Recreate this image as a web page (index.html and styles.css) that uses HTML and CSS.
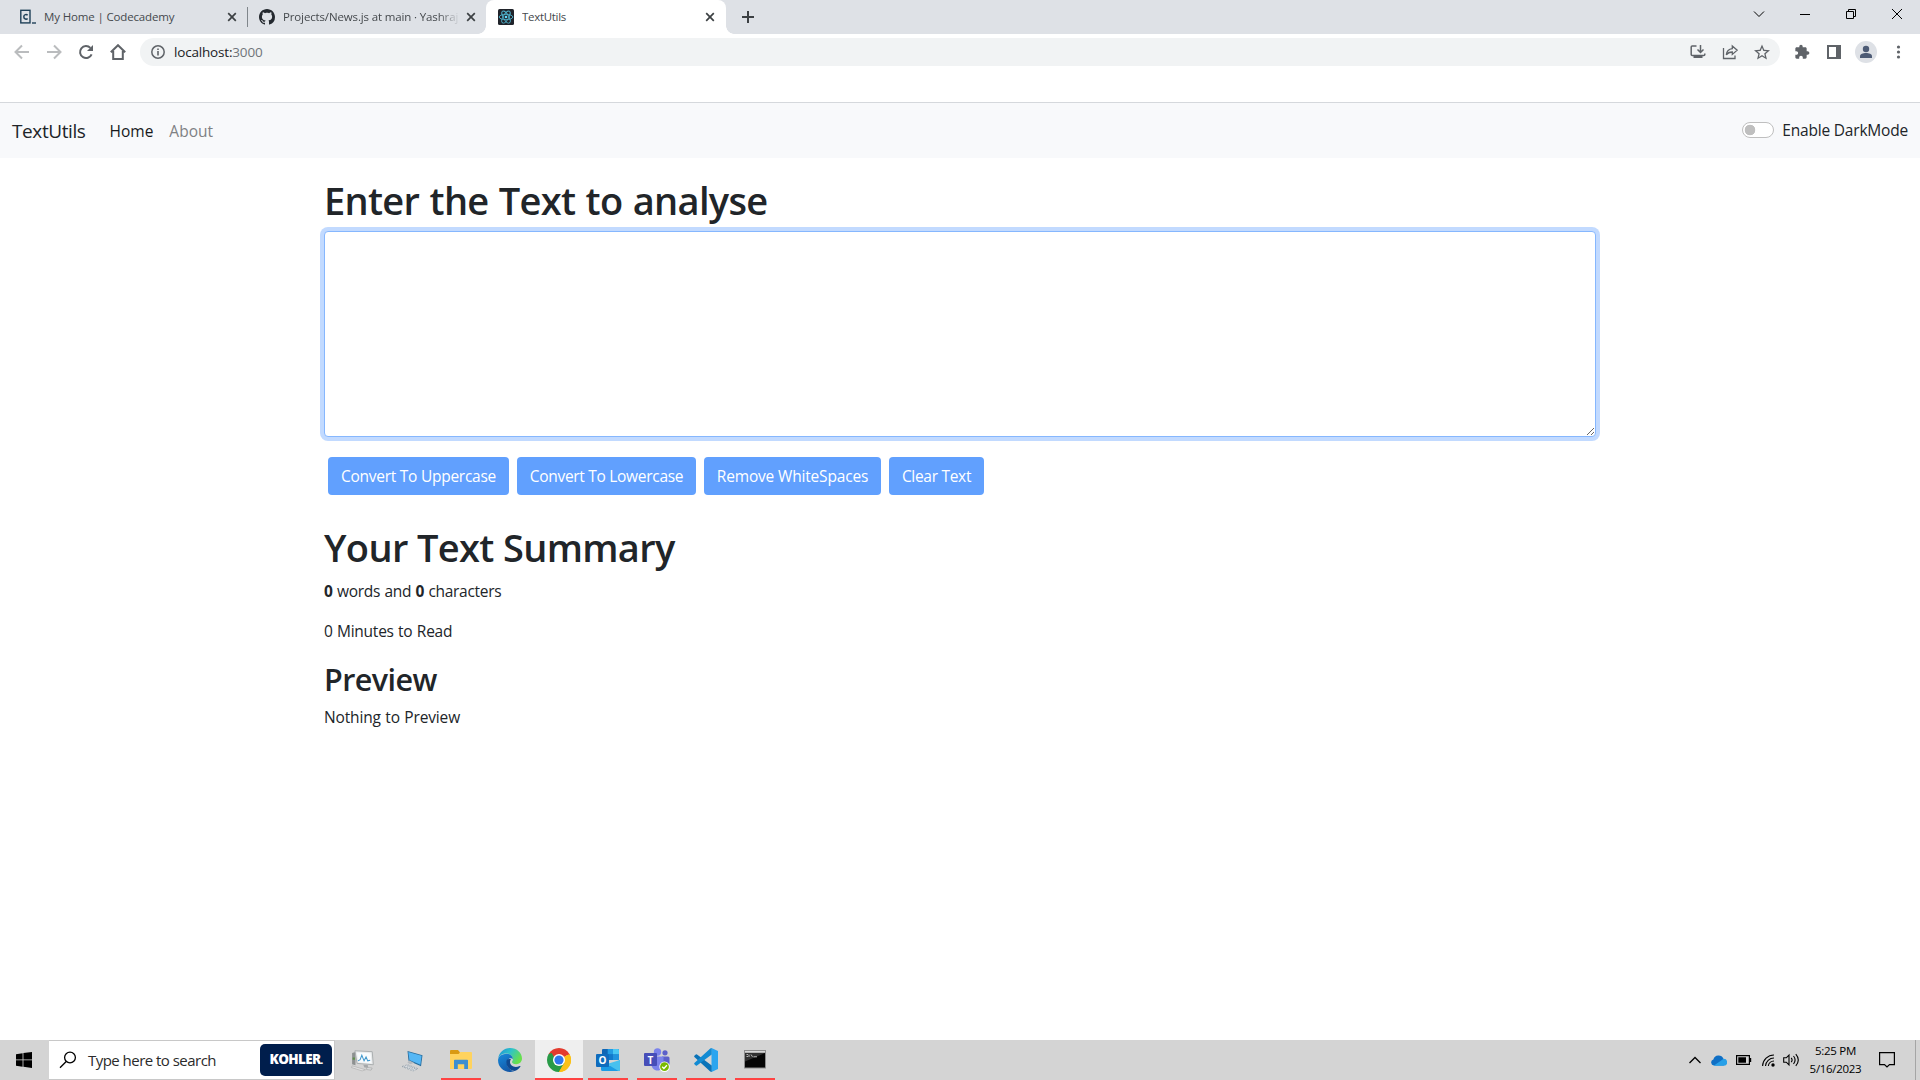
FILE: index.html
```html
<!DOCTYPE html>
<html lang="en">
<head>
<meta charset="utf-8">
<title>TextUtils</title>
<link rel="stylesheet" href="styles.css">
</head>
<body>
<header class="tabs">
  <div class="tab tab-first">
    <svg class="fav" viewBox="0 0 16 16"><rect x=".8" y="1.300" width="9.200" height="12.600" fill="none" stroke="#1f4058" stroke-width="1.400"/><path d="M7.600 6.200C6.600 5.100 3.800 5.200 3.800 7.800S6.600 10.600 7.600 9.500" fill="none" stroke="#1f4058" stroke-width="1.500"/><path d="M12 14h4" stroke="#1f4058" stroke-width="1.400"/></svg>
    <span class="tab-title t-code">My Home | Codecademy</span>
    <svg class="x" viewBox="0 0 10 10"><path d="M1.200 1.200l7.600 7.600M8.800 1.200L1.200 8.800"/></svg>
  </div>
  <div class="tab tab-second">
    <svg class="fav" viewBox="0 0 16 16"><path fill="#24292f" d="M8 0C3.580 0 0 3.580 0 8c0 3.540 2.290 6.530 5.470 7.590.4.070.55-.17.55-.38 0-.19-.01-.82-.01-1.490-2.010.37-2.530-.49-2.690-.94-.09-.23-.48-.94-.82-1.130-.28-.15-.68-.52-.01-.53.63-.01 1.080.58 1.230.82.720 1.210 1.870.87 2.330.66.070-.52.280-.87.510-1.070-1.780-.2-3.640-.89-3.640-3.950 0-.87.310-1.590.82-2.150-.08-.2-.36-1.020.08-2.120 0 0 .67-.21 2.200.82.64-.18 1.320-.27 2-.27s1.360.09 2 .27c1.530-1.040 2.200-.82 2.200-.82.44 1.100.16 1.920.08 2.120.51.56.82 1.270.82 2.150 0 3.070-1.870 3.750-3.650 3.950.29.25.54.73.54 1.480 0 1.070-.01 1.930-.01 2.200 0 .21.15.46.55.38A8.010 8.010 0 0 0 16 8c0-4.420-3.580-8-8-8z"/></svg>
    <span class="tab-title t-git">Projects/News.js at main · Yashraj</span>
    <svg class="x" viewBox="0 0 10 10"><path d="M1.200 1.200l7.600 7.600M8.800 1.200L1.200 8.800"/></svg>
  </div>
  <div class="tab tab-active">
    <svg class="fav" viewBox="0 0 16 16"><rect width="16" height="16" rx="1.500" fill="#20232a"/><g fill="none" stroke="#4fb3cd" stroke-width=".9"><ellipse cx="8" cy="8" rx="6.800" ry="2.700"/><ellipse cx="8" cy="8" rx="6.800" ry="2.700" transform="rotate(60 8 8)"/><ellipse cx="8" cy="8" rx="6.800" ry="2.700" transform="rotate(120 8 8)"/></g><circle cx="8" cy="8" r="1.300" fill="#61dafb"/></svg>
    <span class="tab-title t-tu">TextUtils</span>
    <svg class="x" viewBox="0 0 10 10"><path d="M1.200 1.200l7.600 7.600M8.800 1.200L1.200 8.800"/></svg>
  </div>
  <svg class="plus" viewBox="0 0 12 12"><path d="M6 0v12M0 6h12" stroke="#3c4043" stroke-width="2"/></svg>
  <div class="win">
    <svg viewBox="0 0 12 12"><path d="M1 3.500l5 5 5-5"/></svg>
    <svg viewBox="0 0 12 12"><path d="M1 6.500h10"/></svg>
    <svg viewBox="0 0 12 12"><path d="M1.500 3.500h7v7h-7zM3.500 3.500v-2h7v7h-2"/></svg>
    <svg viewBox="0 0 12 12"><path d="M1 1l10 10M11 1L1 11"/></svg>
  </div>
</header>
<div class="toolbar">
  <svg class="nav-i dim" viewBox="0 0 16 16"><path d="M15 8H2M8 1.500L1.500 8 8 14.500"/></svg>
  <svg class="nav-i dim" viewBox="0 0 16 16"><path d="M1 8h13M8 1.500L14.500 8 8 14.500"/></svg>
  <svg class="nav-i" viewBox="0 0 16 16"><path d="M13.600 10.300A6 6 0 1 1 12.400 3.900"/><path d="M15 1v6H9z" fill="#5f6368" stroke="none"/></svg>
  <svg class="nav-i" viewBox="0 0 16 16"><path d="M.8 8.300L8 1.200l7.200 7.100M3.200 7v8h9.600V7"/></svg>
  <div class="omni">
    <svg class="info" viewBox="0 0 14 14"><circle cx="7" cy="7" r="6.200" fill="none" stroke="#5f6368" stroke-width="1.500"/><path d="M7 6v4.500M7 3.400v1.600" stroke="#5f6368" stroke-width="1.600"/></svg>
    <span class="t-url">localhost:<i>3000</i></span>
    <div class="omni-icons">
      <svg viewBox="0 0 16 16"><path d="M6.500 2H2.200Q1.200 2 1.200 3v7.500q0 1 1 1h11.600q1 0 1-1V9.500M10.500 1v7M7.500 5.500l3 3 3-3" fill="none" stroke="#5f6368" stroke-width="1.500"/><path d="M3.500 11.500h9V14h-9z" fill="#5f6368"/></svg>
      <svg viewBox="0 0 16 16"><path d="M1.500 4v10.500h11.500V11.500M10.300 2l4.900 4.200-4.900 4.200V8C7.500 8 5.700 8.800 4.300 10.800 4.700 7.400 6.500 5 10.300 4.600z" fill="none" stroke="#5f6368" stroke-width="1.300"/></svg>
      <svg viewBox="0 0 24 24"><path fill="#5f6368" d="M22 9.240l-7.190-.62L12 2 9.190 8.630 2 9.240l5.460 4.730L5.820 21 12 17.270 18.180 21l-1.630-7.030L22 9.240zM12 15.400l-3.760 2.270 1-4.280-3.320-2.880 4.380-.38L12 6.100l1.710 4.040 4.380.38-3.320 2.880 1 4.280L12 15.400z" transform="translate(-2.400 -1.800) scale(1.200)"/></svg>
    </div>
  </div>
  <div class="ext">
    <svg viewBox="0 0 24 24"><path fill="#5f6368" d="M20.500 11H19V7c0-1.100-.9-2-2-2h-4V3.500C13 2.120 11.880 1 10.500 1S8 2.120 8 3.500V5H4c-1.100 0-1.990.9-1.990 2v3.800H3.500c1.490 0 2.700 1.210 2.700 2.700s-1.210 2.700-2.700 2.700H2V20c0 1.100.9 2 2 2h3.800v-1.500c0-1.490 1.210-2.700 2.700-2.700 1.490 0 2.700 1.210 2.700 2.700V22H17c1.100 0 2-.9 2-2v-4h1.500c1.380 0 2.500-1.120 2.500-2.500S21.880 11 20.500 11z"/></svg>
    <svg viewBox="0 0 16 16"><path fill="#5f6368" fill-rule="evenodd" d="M1 1h14v14H1zM3 3v10h7V3z"/></svg>
    <svg class="avatar" viewBox="0 0 22 22"><circle cx="11" cy="11" r="11" fill="#dee1e6"/><circle cx="11" cy="8" r="3.200" fill="#4d5b75"/><path d="M5 17v-1.700c0-2.300 3-3.300 6-3.300s6 1 6 3.300V17z" fill="#4d5b75"/></svg>
    <svg viewBox="0 0 16 16" fill="#5f6368"><circle cx="8.500" cy="3" r="1.600"/><circle cx="8.500" cy="8" r="1.600"/><circle cx="8.500" cy="13" r="1.600"/></svg>
  </div>
</div>
<nav class="navbar">
  <span class="brand">TextUtils</span>
  <span class="link">Home</span>
  <span class="link muted">About</span>
  <label class="dark"><span class="switch"></span>Enable DarkMode</label>
</nav>
<main class="container">
  <h1 class="h-enter">Enter the Text to analyse</h1>
  <textarea class="box"></textarea>
  <div class="buttons">
    <button class="b1">Convert To Uppercase</button>
    <button class="b2">Convert To Lowercase</button>
    <button class="b3">Remove WhiteSpaces</button>
    <button class="b4">Clear Text</button>
  </div>
  <h1 class="h-summary">Your Text Summary</h1>
  <p class="words"><b>0</b> words and <b>0</b> characters</p>
  <p class="minutes">0 Minutes to Read</p>
  <h2>Preview</h2>
  <p class="nothing">Nothing to Preview</p>
</main>
<footer class="taskbar">
  <div class="start"><svg viewBox="0 0 16 16" width="16" height="16"><path d="M0 2.200L6.600 1.200v6.300H0zM7.400 1.100L16 0v7.500H7.400zM0 8.300h6.600v6.400L0 13.800zM7.400 8.300H16V16l-8.600-1.200z"/></svg></div>
  <div class="search">
    <svg viewBox="0 0 18 18" width="18" height="18"><circle cx="11" cy="6.500" r="5.400" fill="none" stroke="#000" stroke-width="1.300"/><path d="M7.200 10.500L1 16.800" stroke="#000" stroke-width="1.300"/></svg>
    <span class="hint">Type here to search</span>
    <span class="kohler">KOHLER<small>.</small></span>
  </div>
  <div class="apps">
    <div class="app"><svg viewBox="1 1.500 21.500 21.500"><path d="M2 6l3-1v12l-3-1z" fill="#8d9191"/><path d="M2.500 10h2v2h-2z" fill="#5f8f4a"/><path d="M4.500 4l15.500.8 1 11.700-14.500-1.200z" fill="#e9ebec" stroke="#a4a8aa" stroke-width=".8"/><path d="M6.300 5.500l12.300.7.800 9-11.800-1z" fill="#f8fbfd"/><path d="M7.200 13l2-1 1.500-4 2 5 1.800-3.500 1.500 3.500 2.200-.5" fill="none" stroke="#3f97cc" stroke-width=".9"/><path d="M2 17.500l12 3.500-3 1L1.500 19z" fill="#e3e3e3" stroke="#a5a5a5" stroke-width=".5"/><path d="M12 16.500l4 .3.500 2.500-3.500-.3z" fill="#a5a8aa"/><path d="M15 19l5 .5-1 1.800-4-.5z" fill="#dfe1e2" stroke="#999" stroke-width=".5"/></svg></div>
    <div class="app"><svg viewBox="0 0 24 24"><path d="M7.500 3l15 4.200-1.500 11-12.500-5.500z" fill="#276b9b"/><path d="M8.300 4l13.300 3.800-1.200 9-11-4.700z" fill="#55b7f5"/><path d="M9 12.300l5 2.500-3.500 1.500-3-1.500z" fill="#b4bac0"/><path d="M2 18.500l5.500-1.800 10.500 4-5 2.300z" fill="#dde0e3" stroke="#8c99a5" stroke-width=".7" stroke-dasharray="2 1"/><path d="M4 18.700l10 3M7 17.800l9 3.200" stroke="#8c99a5" stroke-width=".8" stroke-dasharray="1.500 1"/></svg></div>
    <div class="app run"><svg viewBox="0 0 24 24"><path d="M1 3q0-1 1-1h7l2 2.500V7H1z" fill="#d99a13"/><path d="M1 6h8.500l2-2H22q1 0 1 1v15q0 1-1 1H1z" fill="#ffd35e"/><path d="M5 21v-8.500q0-.8.800-.8h12.400q.8 0 .8.800V21h-3.800v-4.800H8.800V21z" fill="#3d8fd0"/></svg></div>
    <div class="app"><svg viewBox="0 0 24 24"><defs><linearGradient id="edge-top" x1="0" y1="0" x2="1" y2=".5"><stop offset="0" stop-color="#1a8fd8"/><stop offset=".5" stop-color="#2fc3c8"/><stop offset="1" stop-color="#68e04b"/></linearGradient><linearGradient id="edge-side" x1="0" y1="0" x2=".5" y2="1"><stop offset="0" stop-color="#178bdc"/><stop offset="1" stop-color="#1459a8"/></linearGradient></defs><path d="M.2 10.500C1 4.500 6 0 12 0c7 0 12 5 12 10.500 0 3.500-2.700 5.700-5.800 5.700-2.700 0-4.200-1-4.200-2.200 0-.7.900-1 .9-2.700C14.900 8 12 5.600 8.500 5.600 4.500 5.600 1.500 7.500.2 10.500z" fill="url(#edge-top)"/><path d="M.1 11.500C.8 7.800 4.500 5.800 8.500 5.700c3.600 0 6.400 2.500 6.400 5.500-1.200-1.700-6-1.200-6 3.800 0 4 3.700 8 7.600 8.100-2 .9-3.300.9-4.500.9C5 24-.5 18 .1 11.500z" fill="url(#edge-side)"/><path d="M8.900 11.800c-2 5 2 10.500 7.500 11.300 2.300-.6 4.500-2.300 5.900-4.400.4-.7 0-1-.6-.7-5.200 2.500-9.500-.2-9.700-3.900 0-1.200.4-2.100 1-2.800-1.500-.6-3-.5-4.100.5z" fill="#104a91"/></svg></div>
    <div class="app current"><svg viewBox="0 0 24 24"><path d="M12 12L1.610 6A12 12 0 0 1 22.390 6z" fill="#e33b2e"/><path d="M12 12L22.390 6A12 12 0 0 1 12 24z" fill="#fbc116"/><path d="M12 12V24A12 12 0 0 1 1.610 6z" fill="#299b48"/><path d="M12 6h10.390l.3 1H12z" fill="#e33b2e"/><path d="M17.200 9l5.200-3A12 12 0 0 1 12 24l5.200-9z" fill="#fbc116"/><path d="M6.800 15L1.610 6l3-1 6 10zM6.800 15l5.200 9 5.200-9z" fill="#299b48"/><path d="M17.200 15L12 24a12 12 0 0 0 2-.2z" fill="#fbc116"/><circle cx="12" cy="12" r="6" fill="#fff"/><circle cx="12" cy="12" r="4.600" fill="#2e78ec"/></svg></div>
    <div class="app run"><svg viewBox="0 0 24 24"><path d="M7 1h15q1 0 1 1v10H6V2q0-1 1-1z" fill="#1066b5"/><path d="M6 6.500h5.700V12H6z" fill="#1685d8"/><path d="M11.700 1H17v5.500h-5.300z" fill="#239be3"/><path d="M17 1h5q1 0 1 1v4.500h-6z" fill="#4ac7f3"/><path d="M11.700 6.500H17V12h-5.300z" fill="#1279cc"/><path d="M17 6.500h6V12h-6z" fill="#2193df"/><path d="M5 12l9.500 6L24 12v9.500q0 1.500-1.500 1.500h-16Q5 23 5 21.500z" fill="#1c9be4"/><path d="M24 12v9.500q0 1.500-1.500 1.500L11 16z" fill="#48c1ef"/><rect y="6" width="13" height="13" rx="1" fill="#0f6cbd"/><text x="6.500" y="16" text-anchor="middle" class="glyph">O</text></svg></div>
    <div class="app run"><svg class="teams" viewBox="0 0 26 24"><circle cx="21" cy="4.800" r="2.600" fill="#5b60ca"/><circle cx="13.500" cy="4" r="3.700" fill="#7b83eb"/><path d="M18 8.500h6q1.500 0 1.500 1.500v5c0 3-2 5-4.500 5h-3z" fill="#5b60ca"/><path d="M8 8.500h11.500V16c0 4-2.500 6.500-6 6.500S7.500 20 7.500 16z" fill="#7b83eb"/><rect y="5" width="13" height="13" rx="1" fill="#464eb8"/><text x="6.500" y="15.500" text-anchor="middle" class="glyph">T</text><circle cx="20.500" cy="18.700" r="5.200" fill="#fff"/><circle cx="20.500" cy="18.700" r="4.400" fill="#79b900"/><path d="M18.200 18.800l1.700 1.700 3-3.200" fill="none" stroke="#fff" stroke-width="1.300"/></svg></div>
    <div class="app run"><svg viewBox="0 0 24 24"><path d="M17.500 0L24 3v18l-6.500 3z" fill="#2ba5ef"/><path d="M.4 7.800l1.400-1.300q.6-.5 1.200 0L17.700 17.500V24q-1 0-1.700-.7L.4 9q-.5-.6 0-1.200z" fill="#0a73b8"/><path d="M.4 16.200l1.400 1.300q.6.500 1.200 0L17.700 6.500V0Q16.700 0 16 .7L.4 15q-.5.6 0 1.200z" fill="#128bd3"/></svg></div>
    <div class="app run"><svg viewBox="0 0 24 24"><rect x="1" y="2" width="22" height="18.500" fill="#8d8d8d"/><path d="M2 3h20v1.500H2z" fill="#d8d8d8"/><path d="M2 5h20v14.500H2z" fill="#050505"/><path d="M2 5h20L2 13.500z" fill="#303030"/><path d="M3.500 6.500h1.500M3.500 8.500h1.500M6 6.500v2.500M8 6.500l1.500 2.300M10.500 8.800h3.500" stroke="#ddd" stroke-width=".8"/></svg></div>
  </div>
  <div class="tray">
    <svg class="chev" viewBox="0 0 14 10" width="14" height="10"><path d="M1.500 8L7 2.500 12.500 8" fill="none" stroke="#000" stroke-width="1.300"/></svg>
    <svg class="cloud" viewBox="0 0 16 11" width="16" height="11"><path d="M3 10.500A3 3 0 0 1 2.400 4.600 5.300 5.300 0 0 1 12.400 3.800 3.500 3.500 0 0 1 12.500 10.500z" fill="#0f6fc5"/><path d="M2.500 10.800L9.500 6l3-2.200a3.400 3.400 0 0 1 .3 7z" fill="#28a0e8"/></svg>
    <svg class="batt" viewBox="0 0 16 10" width="16" height="10"><path d="M.6.6h12.800v8.800H.6z" fill="none" stroke="#000" stroke-width="1.200"/><path d="M2.300 2.300h7.700v5.400H2.300zM14 3h1.200v4H14z"/></svg>
    <svg class="wifi" viewBox="0 0 13 13" width="13" height="13"><g fill="none" stroke="#000" stroke-width="1.100"><path d="M.6 12A11.400 11.400 0 0 1 12 1"/><path d="M3.500 12A8.500 8.500 0 0 1 12 4"/><path d="M6.300 12A5.700 5.700 0 0 1 12 7"/></g><circle cx="11" cy="11" r="1.700"/></svg>
    <svg class="vol" viewBox="0 0 17 14" width="17" height="14"><path d="M.7 4.800h2.600L6 2v10L3.300 9.200H.7zM8.200 4.800q1.800 2.200 0 4.400M10.500 3q3.200 4 0 8M12.800 1.200q5 5.800 0 11.600" fill="none" stroke="#000" stroke-width="1.100"/></svg>
    <div class="clock"><span>5:25 PM</span><span class="date">5/16/2023</span></div>
    <svg class="note" viewBox="0 0 16 16" width="16" height="16"><path d="M.6.6h14.800v12H10.500L8 15 5.500 12.600H.6z" fill="none" stroke="#000" stroke-width="1.200"/></svg>
  </div>
</footer>
</body>
</html>
```
FILE: styles.css
```css
* { box-sizing: border-box; }
body {
  margin: 0;
  width: 1920px;
  height: 1080px;
  overflow: hidden;
  display: flex;
  flex-direction: column;
  background: #fff;
  color: #212529;
  font: 15.5px/24px "Open Sans", "Noto Sans", sans-serif;
}
svg { flex: none; display: block; }

/* browser tabs */
.tabs { height: 34px; background: #dee1e6; display: flex; align-items: center; }
.tab { display: flex; align-items: center; height: 34px; font-size: 11.5px; color: #45494d; position: relative; }
.fav { width: 16px; height: 16px; }
.tab-title { flex: 1; margin-left: 8px; white-space: nowrap; overflow: hidden; }
.x { width: 10px; height: 10px; stroke: #3c4043; stroke-width: 1.7; fill: none; }
.tab-first { width: 248px; padding: 0 11px 0 20px; }
.tab-first::after { content: ""; position: absolute; right: 0; top: 7px; width: 1px; height: 20px; background: #80868b; }
.tab-second { width: 238px; padding: 0 10px 0 11px; }
.t-code { letter-spacing: -.15px; }
.t-git {
  letter-spacing: -.14px;
  margin-right: 8px;
  -webkit-mask-image: linear-gradient(to right, #000 155px, transparent 177px);
  mask-image: linear-gradient(to right, #000 155px, transparent 177px);
}
.t-tu { letter-spacing: -.3px; }
.tab-active { width: 240px; padding: 0 11px 0 12px; background: #fff; border-radius: 8px 8px 0 0; }
.tab-active::before, .tab-active::after { content: ""; position: absolute; bottom: 0; width: 8px; height: 8px; }
.tab-active::before { left: -8px; background: radial-gradient(circle at 0 0, transparent 7.5px, #fff 8px); }
.tab-active::after { right: -8px; background: radial-gradient(circle at 100% 0, transparent 7.5px, #fff 8px); }
.plus { width: 12px; height: 12px; margin-left: 16px; }
.win { margin-left: auto; display: flex; gap: 34px; padding: 0 17px 6px 0; }
.win svg { width: 12px; height: 12px; fill: none; stroke: #000; }

/* address bar */
.toolbar { height: 69px; display: flex; align-items: flex-start; border-bottom: 1px solid #d5d8dc; padding: 4px 0 0 14px; }
.nav-i { width: 16px; height: 16px; margin: 6px 16px 0 0; fill: none; stroke: #5f6368; stroke-width: 2; }
.dim { stroke: #babcbe; }
.omni { width: 1640px; margin-left: -2px; height: 28px; border-radius: 14px; background: #f1f3f4; display: flex; align-items: center; padding: 0 10px 0 11px; font-size: 13.5px; color: #202124; }
.info { width: 14px; height: 14px; margin-right: 9px; }
.t-url { letter-spacing: -.18px; }
.omni i { font-style: normal; color: #70757a; }
.omni-icons { margin-left: auto; display: flex; gap: 16px; }
.omni-icons svg { width: 16px; height: 16px; }
.ext { display: flex; align-items: center; height: 28px; gap: 16px; padding-left: 14px; }
.ext svg { width: 16px; height: 16px; }
.ext .avatar { width: 22px; height: 22px; margin: 0 -3px; }

/* page header */
.navbar { height: 55px; background: #f8f9fb; display: flex; align-items: center; padding: 0 12px; gap: 16px; }
.brand { font-size: 19px; letter-spacing: -.4px; margin-right: 8px; padding-top: 1px; }
.link { padding-top: 1px; color: #17191b; }
.muted { color: #7f8184; }
.dark { margin-left: auto; display: flex; align-items: center; gap: 8px; letter-spacing: -.2px; padding-bottom: 1px; }
.switch { width: 32px; height: 16px; border: 1px solid #bfbfbf; border-radius: 8px; background: radial-gradient(circle at 7px 7px, #bfbfbf 5px, #fff 5.6px); }

/* content */
.container { width: 1272px; margin: 16px auto 0; flex: 1; }
h1 { margin: 0; font-size: 38px; line-height: 52px; font-weight: 600; }
.h-enter { letter-spacing: -.67px; word-spacing: 1px; margin-bottom: 5px; }
.h-summary { letter-spacing: -.64px; padding-top: 2px; margin-bottom: 6px; }
h2 { margin: 0 0 6px; font-size: 30.5px; line-height: 40px; font-weight: 600; letter-spacing: -.55px; }
p { margin: 0 0 16px; }
.words { letter-spacing: -.31px; word-spacing: .7px; }
.minutes { letter-spacing: -.25px; word-spacing: .6px; }
.nothing { letter-spacing: -.15px; word-spacing: .6px; }
.box { display: block; width: 1272px; height: 206px; border: 1px solid #86b7fe; border-radius: 4px; box-shadow: 0 0 0 4px #c2daff; background: #fff; outline: 0; }
.buttons { display: flex; gap: 8px; margin: 20px 4px 24px; }
button { height: 38px; padding: 0; border: 0; border-radius: 4px; background: #61a0fe; color: #fff; font: 15.5px/24px "Open Sans", "Noto Sans", sans-serif; }
.b1 { width: 181px; letter-spacing: -.26px; }
.b2 { width: 179px; letter-spacing: -.3px; }
.b3 { width: 177px; letter-spacing: -.17px; }
.b4 { width: 95px; letter-spacing: -.3px; }

/* taskbar */
.taskbar { height: 40px; background: #d4d4d4; display: flex; }
.start { width: 49px; padding: 12px 16px; }
.search { width: 286px; background: #fff; border: 1px solid #c8c8c8; border-left: 0; display: flex; align-items: center; padding: 0 2px 0 10px; }
.hint { margin-left: 11px; font-size: 15px; letter-spacing: -.53px; color: #2b2b2b; }
.kohler { margin-left: auto; width: 72px; height: 32px; border-radius: 5px; background: #001e4c; color: #fff; font-weight: 800; font-size: 13.5px; line-height: 31px; letter-spacing: -.65px; text-align: center; }
.kohler small { font-size: 9px; }
.apps { display: flex; gap: 1px; margin-left: 4px; }
.app { width: 48px; height: 40px; display: flex; align-items: center; justify-content: center; }
.app svg { width: 24px; height: 24px; }
.app .teams { width: 26px; }
.run { background: linear-gradient(#ff4343, #ff4343) center bottom / 40px 2px no-repeat; }
.current { background: #efefef; box-shadow: inset 0 -2px #ff4343; }
.glyph { font: 700 10px "Open Sans", sans-serif; fill: #fff; }
.tray { margin-left: auto; display: flex; align-items: center; padding-right: 4px; }
.cloud { margin-left: 9px; }
.batt { margin-left: 9px; }
.wifi { margin-left: 10px; }
.vol { margin-left: 8px; }
.clock { width: 55px; margin-left: 8px; display: flex; flex-direction: column; align-items: center; font-size: 11.5px; line-height: 18px; letter-spacing: -.3px; color: #000; white-space: nowrap; }
.note { margin: 0 20px 0 16px; }
.tray::after { content: ""; width: 1px; height: 40px; background: #a5a5a5; }
```
